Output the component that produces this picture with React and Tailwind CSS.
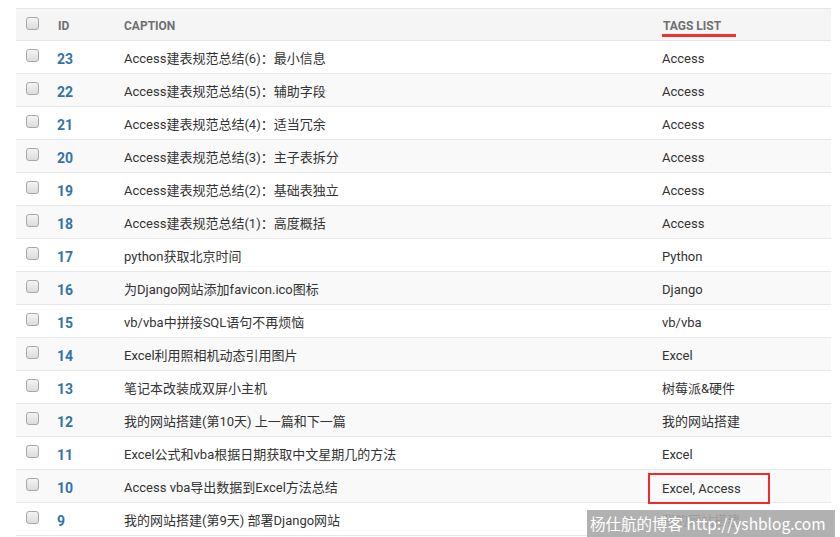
import React from "react";

const rows = [
  { id: 23, caption: "Access建表规范总结(6)：最小信息", tags: "Access" },
  { id: 22, caption: "Access建表规范总结(5)：辅助字段", tags: "Access" },
  { id: 21, caption: "Access建表规范总结(4)：适当冗余", tags: "Access" },
  { id: 20, caption: "Access建表规范总结(3)：主子表拆分", tags: "Access" },
  { id: 19, caption: "Access建表规范总结(2)：基础表独立", tags: "Access" },
  { id: 18, caption: "Access建表规范总结(1)：高度概括", tags: "Access" },
  { id: 17, caption: "python获取北京时间", tags: "Python" },
  { id: 16, caption: "为Django网站添加favicon.ico图标", tags: "Django" },
  { id: 15, caption: "vb/vba中拼接SQL语句不再烦恼", tags: "vb/vba" },
  { id: 14, caption: "Excel利用照相机动态引用图片", tags: "Excel" },
  { id: 13, caption: "笔记本改装成双屏小主机", tags: "树莓派&硬件" },
  { id: 12, caption: "我的网站搭建(第10天) 上一篇和下一篇", tags: "我的网站搭建" },
  { id: 11, caption: "Excel公式和vba根据日期获取中文星期几的方法", tags: "Excel" },
  { id: 10, caption: "Access vba导出数据到Excel方法总结", tags: "Excel, Access", boxed: true },
  { id: 9, caption: "我的网站搭建(第9天) 部署Django网站", tags: "我的网站搭建" },
];

const Checkbox = () => (
  <span className="block w-[13px] h-[13px] rounded-[3px] border border-[#a8a8a8] bg-gradient-to-b from-[#f4f4f4] to-[#dcdcdc]" />
);

const App = () => {
  return (
    <div
      className="relative w-[840px] h-[537px] overflow-hidden bg-white pt-[8px] pl-[16px]"
      style={{ fontFamily: 'Roboto, "Noto Sans CJK SC", sans-serif' }}
    >
      <div className="w-[815px]">
        {/* header */}
        <div className="flex items-center h-[33px] bg-[#f5f5f5] border-t border-b border-[#e6e6e6] text-[12px] font-bold text-[#707070] uppercase">
          <div className="w-[41px] pl-[10px] pb-[2px]">
            <Checkbox />
          </div>
          <div className="w-[67px] pl-[1px] pt-[2px]">ID</div>
          <div className="w-[538px] pt-[2px]">Caption</div>
          <div className="flex-1 pt-[2px]">
            <span className="relative inline-block pl-[1px]">
              Tags List
              <span className="absolute left-0 top-[17px] w-[74px] h-[3px] bg-[#f03232]" />
            </span>
          </div>
        </div>
        {rows.map((r, i) => (
          <div
            key={r.id}
            className={
              "flex items-center h-[33px] border-b border-[#e8e8e8] text-[13px] text-[#333] " +
              (i % 2 === 0 ? "bg-white" : "bg-[#f9f9f9]")
            }
          >
            <div className="w-[41px] pl-[10px] pb-[3px]">
              <Checkbox />
            </div>
            <div className="w-[67px] pt-[4px] font-bold text-[14px] text-[#3473ab]">{r.id}</div>
            <div className="w-[538px] pt-[4px]">{r.caption}</div>
            <div className="flex-1 pt-[4px]">
              {r.boxed ? (
                <span className="inline-block -ml-[14px] w-[122px] h-[31px] border-2 border-[#f02a2a] pl-[12px] leading-[27px]">
                  {r.tags}
                </span>
              ) : (
                r.tags
              )}
            </div>
          </div>
        ))}
      </div>
      <div
        className="absolute left-[587px] top-[510px] w-[248px] h-[27px] bg-[#a9a9a9]/90 text-white text-[15.5px] pl-[3px] leading-[26px] whitespace-nowrap"
        style={{ fontFamily: '"Noto Sans CJK SC", sans-serif' }}
      >
        杨仕航的博客 http://yshblog.com
      </div>
    </div>
  );
};

export default App;
